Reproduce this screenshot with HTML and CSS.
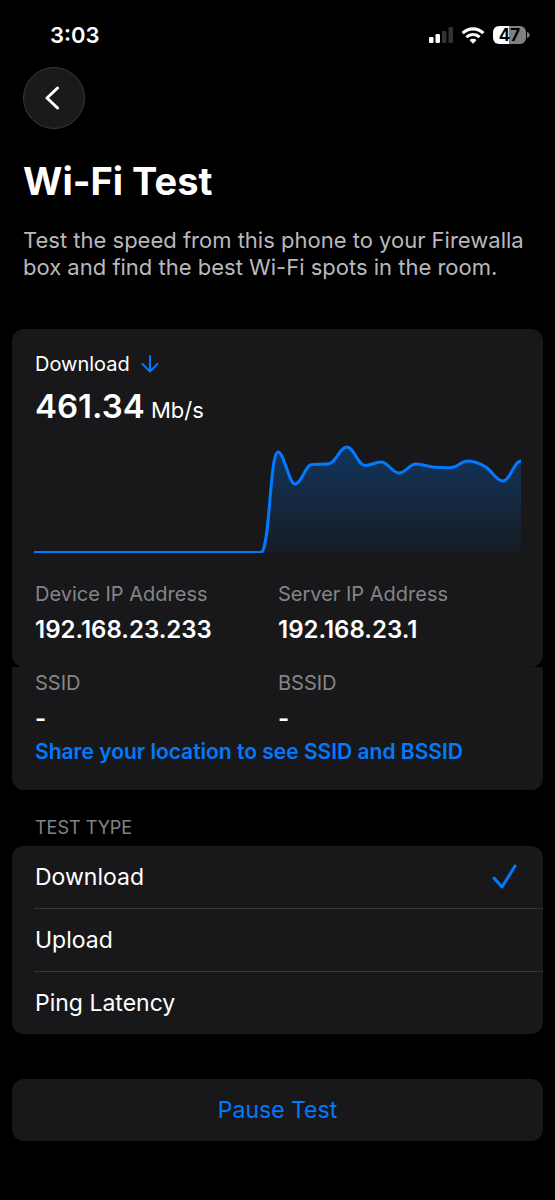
FILE: index.html
```html
<!DOCTYPE html>
<html lang="en">
<head>
<meta charset="utf-8">
<meta name="viewport" content="width=device-width, initial-scale=1">
<title>Wi-Fi Test</title>
<link rel="stylesheet" href="styles.css">
</head>
<body>
<div class="status-bar">
  <time class="clock">3:03</time>
  <div class="status-icons">
    <svg class="signal" width="24" height="16" viewBox="0 0 24 16" aria-label="Signal">
      <rect x="0" y="10" width="4.5" height="6" rx="1.3" fill="#fff"/>
      <rect x="6.5" y="7" width="4.5" height="9" rx="1.3" fill="#fff"/>
      <rect x="13" y="4" width="4.5" height="12" rx="1.3" fill="#333"/>
      <rect x="19.5" y="0" width="4.5" height="16" rx="1.3" fill="#333"/>
    </svg>
    <svg width="24" height="17" viewBox="0 0 24 17" aria-label="Wi-Fi" fill="none" stroke="#fff" stroke-width="3.1">
      <path d="M1.6 6.1C7.4.4 16.6.4 22.4 6.1"/>
      <path d="M5.4 10.1C9.2 6.6 14.8 6.6 18.6 10.1"/>
      <path d="M8.4 13.1C10.5 11.3 13.5 11.3 15.6 13.1L12 16.8Z" fill="#fff" stroke="none"/>
    </svg>
    <div class="battery"><span class="battery-level">47</span><svg width="3" height="6" viewBox="0 0 3 6" aria-hidden="true"><path d="M0 0C3.6 1 3.6 5 0 6Z" fill="#808080"/></svg></div>
  </div>
</div>
<main class="screen">
  <header class="header">
    <button class="back" type="button" aria-label="Back">
      <svg width="14" height="24" viewBox="0 0 14 24" fill="none" stroke="#fff" stroke-width="3" stroke-linecap="round" stroke-linejoin="round"><path d="M12.5 2L2 12L12.5 22"/></svg>
    </button>
    <h1 class="title">Wi-Fi Test</h1>
    <p class="intro">Test the speed from this phone to your Firewalla box and find the best Wi-Fi spots in the room.</p>
  </header>

  <section class="card result">
    <h2 class="metric">Download
      <svg width="18" height="18" viewBox="0 0 18 18" fill="none" stroke="#007aff" stroke-width="2" stroke-linecap="round" stroke-linejoin="round"><path d="M9 1V16.5M1.5 9L9 16.5L16.5 9"/></svg>
    </h2>
    <p class="speed"><strong class="speed-value">461.34</strong> Mb/s</p>
    <svg class="chart" viewBox="0 0 487 116" role="img" aria-label="Download speed over time">
      <defs><linearGradient id="fade" x1="0" y1="0" x2="0" y2="1"><stop offset="0" stop-color="#007aff" stop-opacity=".3"/><stop offset="1" stop-color="#007aff" stop-opacity=".04"/></linearGradient></defs>
      <path fill="url(#fade)" d="M228 112C236 104 236 12 244 12C250 12 255 44 261 44C268 44 271 24.500 278 24.500C287 24 290 25 296 23.500C302 22 306 7 313 7C320 7 324 25.500 331 25.500C337 25.500 341 22 347 22C354 22 358 33 365 33C372 33 375 24 382 24C388 24 392 26 399 27C404 27.500 412 28 418 27.500C424 27 427 21 434 21C441 21 446 23.500 452 27C458 31 462 41 469 41C476 41 480 21 487 21V113H228Z"/>
      <path fill="none" stroke="#007aff" stroke-width="2" d="M0 112H229"/>
      <path fill="none" stroke="#007aff" stroke-width="3" stroke-linejoin="round" d="M228 112C236 104 236 12 244 12C250 12 255 44 261 44C268 44 271 24.500 278 24.500C287 24 290 25 296 23.500C302 22 306 7 313 7C320 7 324 25.500 331 25.500C337 25.500 341 22 347 22C354 22 358 33 365 33C372 33 375 24 382 24C388 24 392 26 399 27C404 27.500 412 28 418 27.500C424 27 427 21 434 21C441 21 446 23.500 452 27C458 31 462 41 469 41C476 41 480 21 487 21"/>
    </svg>
    <dl class="facts">
      <div><dt>Device IP Address</dt><dd>192.168.23.233</dd></div>
      <div><dt>Server IP Address</dt><dd>192.168.23.1</dd></div>
    </dl>
  </section>
  <section class="card network">
    <dl class="facts">
      <div><dt>SSID</dt><dd>-</dd></div>
      <div><dt>BSSID</dt><dd>-</dd></div>
    </dl>
    <a class="share" href="#location">Share your location to see SSID and BSSID</a>
  </section>

  <fieldset class="types">
    <legend class="types-title">TEST TYPE</legend>
    <div class="card options">
      <label class="option"><span class="option-row">Download<input class="pick" type="radio" name="type" checked><svg class="tick" width="26" height="26" viewBox="0 0 26 26" fill="none" stroke="#007aff" stroke-width="3" stroke-linecap="round" stroke-linejoin="round"><path d="M3 14L11 23L24 2"/></svg></span></label>
      <label class="option"><span class="option-row">Upload<input class="pick" type="radio" name="type"></span></label>
      <label class="option"><span class="option-row">Ping Latency<input class="pick" type="radio" name="type"></span></label>
    </div>
  </fieldset>
  <button class="card pause" type="button">Pause Test</button>
</main>
</body>
</html>
```
FILE: styles.css
```css
* { box-sizing: border-box; margin: 0; }

body {
  background: #000;
  color: #fff;
  font-family: Inter, "Liberation Sans", sans-serif;
  font-size: 22px;
  line-height: 28px;
}

.status-bar {
  display: flex;
  align-items: center;
  justify-content: space-between;
  padding: 20px 25px 0 50px;
}

.clock {
  font-size: 22px;
  font-weight: 600;
  line-height: 30px;
}

.status-icons {
  display: flex;
  align-items: center;
  gap: 8px;
}

.battery {
  display: flex;
  align-items: center;
  gap: 1px;
}

.battery-level {
  width: 33px;
  border-radius: 6px;
  background: linear-gradient(90deg, #fff 47%, #808080 47%);
  color: #000;
  font-size: 17px;
  font-weight: 700;
  line-height: 18px;
  text-align: center;
}

.screen { padding: 17px 12px 58px; }

.header { padding: 0 11px; }

.back {
  display: grid;
  place-items: center;
  width: 62px;
  height: 62px;
  padding: 0 4px 0 0;
  border: 1px solid #383838;
  border-radius: 50%;
  background: #1a1a1a;
}

.title {
  margin-top: 28px;
  font-size: 38px;
  font-weight: 700;
  line-height: 48px;
}

.intro {
  margin-top: 22px;
  color: #b8b8bd;
  line-height: 27px;
}

.card {
  border-radius: 12px;
  background: #18181a;
}

.result {
  margin-top: 48px;
  padding: 21px 22px 23px;
}

.metric {
  display: flex;
  align-items: center;
  gap: 11px;
  font-size: 20px;
  font-weight: 400;
}

.speed {
  margin-top: 6px;
  line-height: 44px;
}

.speed-value {
  font-size: 33px;
  font-weight: 600;
}

.chart {
  display: block;
  width: 100%;
  margin-top: 8px;
}

.facts {
  display: grid;
  grid-template-columns: 1fr 1fr;
  padding-left: 1px;
}

.result .facts { margin-top: 24px; }

.metric, .speed, .share { padding-left: 1px; }

dt {
  color: #858588;
  font-size: 20px;
}

dd {
  margin-top: 8px;
  font-size: 24px;
  font-weight: 600;
}

.network {
  padding: 2px 22px 24px;
  border-radius: 0 0 12px 12px;
}

.share {
  display: block;
  margin-top: 5px;
  color: #007aff;
  font-size: 21px;
  font-weight: 600;
  text-decoration: none;
}

.types {
  min-width: 0;
  margin-top: 24px;
  padding: 0;
  border: 0;
}

.types-title {
  padding: 0 0 4px 23px;
  color: #858588;
  font-size: 18px;
}

.option {
  display: block;
  padding-left: 22px;
  font-size: 23px;
}

.option-row {
  display: flex;
  align-items: center;
  justify-content: space-between;
  height: 62px;
  padding: 0 26px 0 1px;
}

.option + .option .option-row {
  height: 63px;
  border-top: 1px solid #353537;
}

.pick {
  width: 0;
  height: 0;
  margin-left: auto;
  appearance: none;
}

.pause {
  display: block;
  width: 100%;
  height: 62px;
  margin-top: 45px;
  border: 0;
  color: #007aff;
  font: inherit;
  font-size: 23px;
}
```
